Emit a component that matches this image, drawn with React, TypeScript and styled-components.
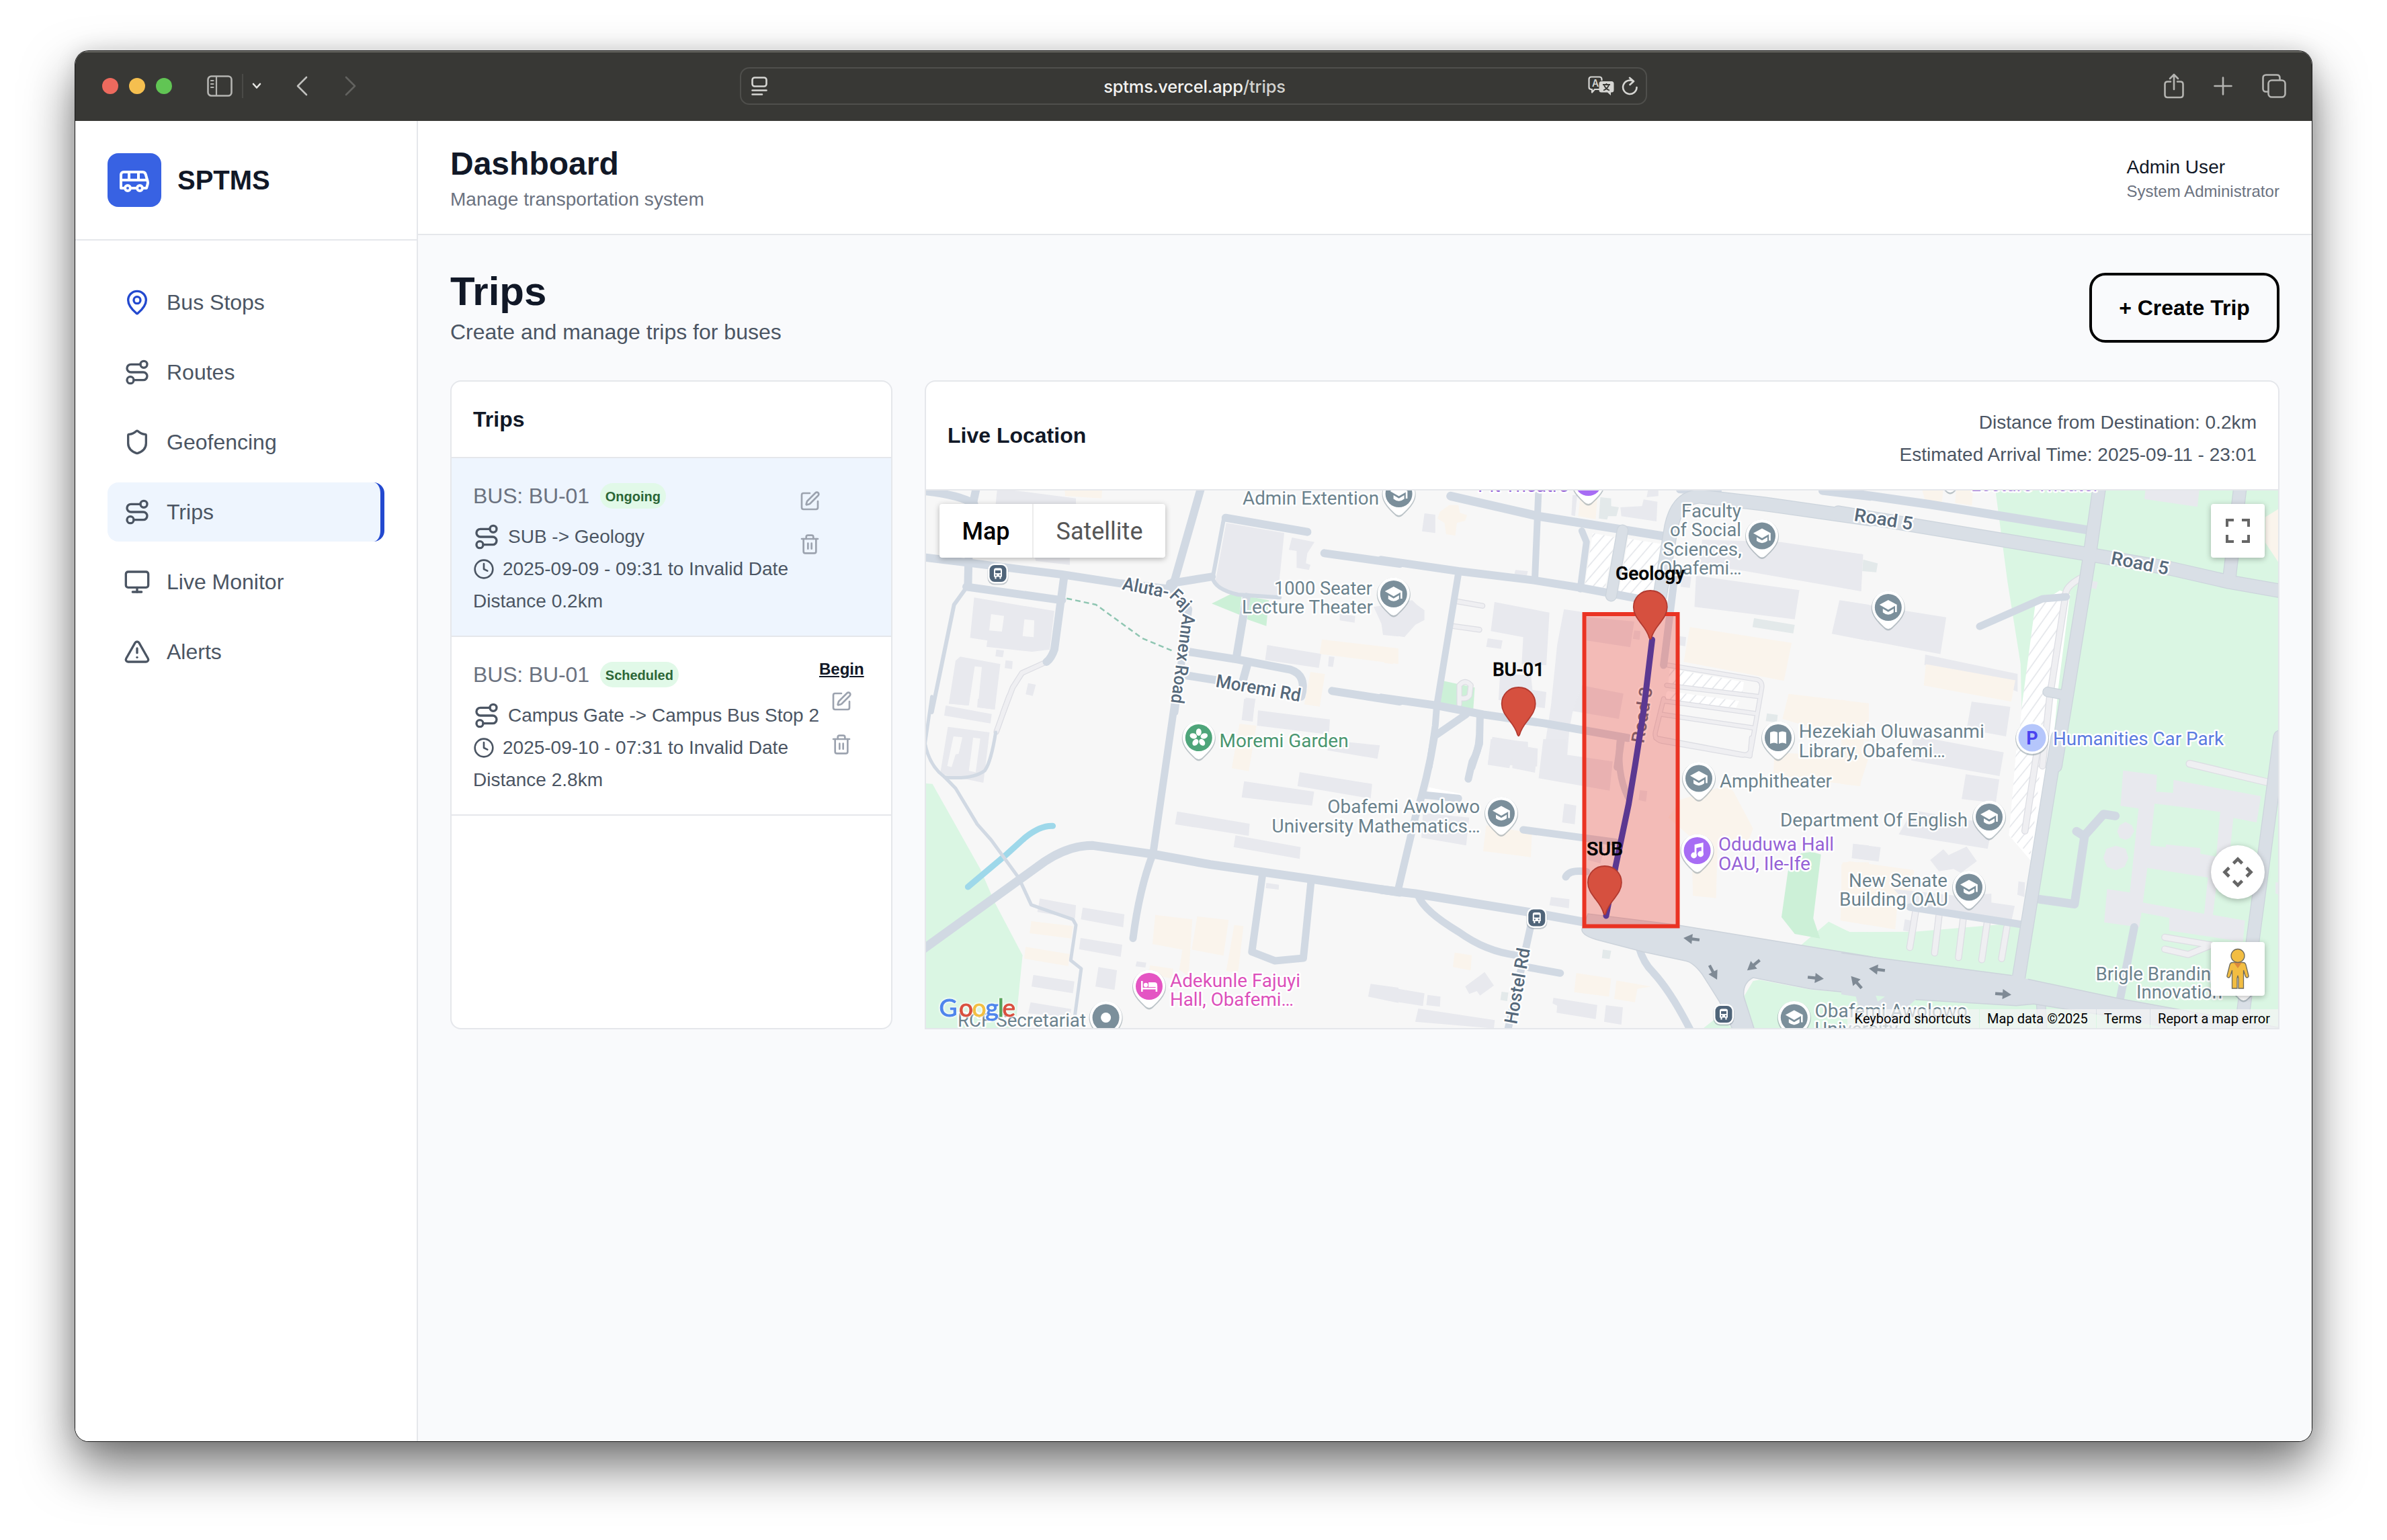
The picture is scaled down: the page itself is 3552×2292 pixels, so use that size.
import React from "react";
import styled, { createGlobalStyle, css } from "styled-components";
import { Bus, Clock, MapPin, Monitor, Route, Shield, SquarePen, Trash2, TriangleAlert } from "lucide-react";

const GlobalStyle = createGlobalStyle`
  *, *::before, *::after { box-sizing: border-box; }
  body { margin: 0; background: #ffffff; }
  h1, h2, h3, p { margin: 0; }
  button { font: inherit; margin: 0; cursor: pointer; }
`;

const colors = {
  ink: "#111827",
  body: "#4b5563",
  muted: "#6b7280",
  faint: "#9ca3af",
  line: "#e5e7eb",
  page: "#f9fafc",
  tint: "#eef5fe",
  blue: "#2349cf",
};

/* ---------- Browser window ---------- */

const Desktop = styled.div`
  width: 3552px;
  height: 2292px;
  padding: 76px 112px 147px;
  background: #ffffff;
  overflow: hidden;
  font-family: "Liberation Sans", Arial, sans-serif;
  color: ${colors.ink};
`;

const BrowserWindow = styled.div`
  width: 3328px;
  height: 2069px;
  display: flex;
  flex-direction: column;
  border-radius: 20px;
  background: #ffffff;
  box-shadow: 0 0 0 1px #161616, 0 36px 76px rgba(0, 0, 0, 0.56), 0 0 30px rgba(0, 0, 0, 0.12);
  overflow: hidden;
`;

const Toolbar = styled.div`
  flex: none;
  height: 105px;
  display: grid;
  grid-template-columns: 989px 1350px 1fr;
  align-items: center;
  background: #383835;
  border-bottom: 1px solid #000000;
  box-shadow: inset 0 2px 0 #6b6b66;
`;

const ToolbarLeft = styled.div`
  display: flex;
  align-items: center;
  padding-left: 40px;
`;

const Light = styled.span<{ $color: string }>`
  width: 24px;
  height: 24px;
  margin-right: 16px;
  border-radius: 50%;
  background: ${(p) => p.$color};
`;

const ToolIcon = styled.svg<{ $gap?: number; $color?: string }>`
  display: block;
  flex: none;
  margin-left: ${(p) => p.$gap ?? 0}px;
  fill: none;
  stroke: ${(p) => p.$color ?? "#b4b4b1"};
  stroke-width: 2.6;
  stroke-linecap: round;
  stroke-linejoin: round;
`;

const ToolDivider = styled.span`
  width: 2px;
  height: 36px;
  margin-left: 14px;
  background: #4a4a47;
`;

const AddressBar = styled.div`
  height: 56px;
  display: flex;
  align-items: center;
  justify-content: space-between;
  padding: 0 11px 0 15px;
  border: 2px solid #4f4f4c;
  border-radius: 14px;
  font: 500 25.5px/32px Inter, sans-serif;
  color: #f2f2f0;
`;

const AddressTools = styled.div`
  display: flex;
  align-items: center;
`;

const Url = styled.span`
  margin-left: 50px;
  padding-top: 2px;
  letter-spacing: -0.2px;
`;

const UrlPath = styled.span`
  color: #d2d2cf;
`;

const ToolbarRight = styled.div`
  display: flex;
  align-items: center;
  justify-content: flex-end;
  padding-right: 38px;
`;

/* ---------- Application shell ---------- */

const Page = styled.div`
  flex: 1;
  min-height: 0;
  margin-top: -1px;
  display: flex;
`;

const Sidebar = styled.aside`
  flex: none;
  width: 510px;
  background: #ffffff;
  border-right: 2px solid ${colors.line};
`;

const Brand = styled.div`
  height: 178px;
  display: flex;
  align-items: center;
  gap: 24px;
  padding: 0 48px;
  border-bottom: 2px solid ${colors.line};
  font-size: 40px;
  line-height: 56px;
  font-weight: 700;
`;

const BrandMark = styled.span`
  width: 80px;
  height: 80px;
  display: grid;
  place-items: center;
  border-radius: 16px;
  background: #3862e3;
  color: #ffffff;
`;

const Nav = styled.nav`
  display: flex;
  flex-direction: column;
  gap: 16px;
  padding: 48px;
`;

const NavItem = styled.a<{ $active?: boolean }>`
  height: 88px;
  display: flex;
  align-items: center;
  gap: 24px;
  padding: 0 24px;
  border-radius: 16px;
  font-size: 32px;
  line-height: 48px;
  color: ${colors.body};
  ${(p) =>
    p.$active &&
    css`
      background: ${colors.tint};
      border-right: 6px solid ${colors.blue};
    `}
`;

const Main = styled.main`
  flex: 1;
  min-width: 0;
  display: flex;
  flex-direction: column;
  background: ${colors.page};
`;

const TopBar = styled.header`
  height: 170px;
  display: flex;
  align-items: center;
  justify-content: space-between;
  padding: 0 48px;
  background: #ffffff;
  border-bottom: 2px solid ${colors.line};
`;

const TopTitle = styled.h1`
  font-size: 48px;
  line-height: 64px;
  font-weight: 700;
`;

const TopText = styled.p<{ $size: number; $line: number; $color: string }>`
  padding-top: 1px;
  margin-bottom: -1px;
  font-size: ${(p) => p.$size}px;
  line-height: ${(p) => p.$line}px;
  letter-spacing: 0.04px;
  color: ${(p) => p.$color};
`;

const Content = styled.div`
  padding: 48px;
  display: flex;
  flex-direction: column;
  gap: 48px;
`;

const Heading = styled.div`
  display: flex;
  align-items: center;
  justify-content: space-between;
`;

const PageTitle = styled.h2`
  font-size: 60px;
  line-height: 72px;
  font-weight: 700;
`;

const PageSubtitle = styled.p`
  font-size: 32px;
  line-height: 48px;
  color: ${colors.body};
`;

const CreateButton = styled.button`
  width: 283px;
  height: 104px;
  padding: 0;
  border: 4px solid #000000;
  border-radius: 24px;
  background: transparent;
  font-size: 32px;
  font-weight: 700;
  color: #000000;
`;

const Columns = styled.div`
  display: grid;
  grid-template-columns: 658px 1fr;
  gap: 48px;
  height: 966px;
`;

const Card = styled.section<{ $flatBottom?: boolean }>`
  display: flex;
  flex-direction: column;
  background: #ffffff;
  border: 2px solid ${colors.line};
  border-radius: ${(p) => (p.$flatBottom ? "16px 16px 0 0" : "16px")};
  overflow: hidden;
`;

const CardHeader = styled.div<{ $height: number }>`
  flex: none;
  height: ${(p) => p.$height}px;
  display: flex;
  align-items: center;
  justify-content: space-between;
  padding: 0 32px;
  border-bottom: 2px solid ${colors.line};
`;

const CardTitle = styled.h3`
  font-size: 32px;
  line-height: 48px;
  font-weight: 700;
`;

const Eta = styled.div`
  display: flex;
  flex-direction: column;
  gap: 8px;
  padding-top: 10px;
  font-size: 28px;
  line-height: 40px;
  letter-spacing: 0.03px;
  text-align: right;
  color: ${colors.body};
`;

/* ---------- Trip list ---------- */

const TripRow = styled.article<{ $selected?: boolean }>`
  display: flex;
  height: 266px;
  padding: 32px;
  border-bottom: 2px solid ${colors.line};
  background: ${(p) => (p.$selected ? colors.tint : "#ffffff")};
`;

const TripInfo = styled.div`
  display: flex;
  flex-direction: column;
  gap: 8px;
  white-space: nowrap;
`;

const TripTitle = styled.div`
  display: flex;
  align-items: center;
  gap: 16px;
  margin-bottom: 8px;
  font-size: 32px;
  line-height: 48px;
  letter-spacing: -0.15px;
  color: ${colors.muted};
`;

const Badge = styled.span`
  height: 38px;
  padding: 0 8px;
  border-radius: 19px;
  background: #e1f9e8;
  font-size: 20px;
  line-height: 40px;
  letter-spacing: 0;
  font-weight: 700;
  color: #2c6637;
`;

const TripLine = styled.div`
  height: 40px;
  display: flex;
  align-items: center;
  gap: 12px;
  padding-top: 1px;
  font-size: 28px;
  line-height: 40px;
  color: ${colors.body};
`;

const TripActions = styled.div`
  display: flex;
  flex-direction: column;
  align-items: center;
`;

const BeginLink = styled.a`
  font-size: 24px;
  line-height: 32px;
  font-weight: 700;
  text-decoration: underline;
  color: ${colors.ink};
`;

const IconButton = styled.button`
  width: 64px;
  height: 64px;
  display: grid;
  place-items: center;
  padding: 0;
  border: 0;
  background: none;
  color: ${colors.faint};
`;

interface Trip {
  bus: string;
  status: string;
  path: string;
  time: string;
  distance: string;
}

const trips: Trip[] = [
  { bus: "BU-01", status: "Ongoing", path: "SUB -> Geology", time: "2025-09-09 - 09:31 to Invalid Date", distance: "0.2km" },
  { bus: "BU-01", status: "Scheduled", path: "Campus Gate -> Campus Bus Stop 2", time: "2025-09-10 - 07:31 to Invalid Date", distance: "2.8km" },
];

const TripItem = ({ trip }: { trip: Trip }) => (
  <TripRow $selected={trip.status === "Ongoing"}>
    <TripInfo>
      <TripTitle>
        <span>BUS: {trip.bus}</span>
        <Badge>{trip.status}</Badge>
      </TripTitle>
      <TripLine>
        <Route size={40} />
        <span>{trip.path}</span>
      </TripLine>
      <TripLine>
        <Clock size={32} />
        <span>{trip.time}</span>
      </TripLine>
      <TripLine>Distance {trip.distance}</TripLine>
    </TripInfo>
    <TripActions>
      {trip.status === "Scheduled" && <BeginLink>Begin</BeginLink>}
      <IconButton aria-label="Edit trip">
        <SquarePen size={32} />
      </IconButton>
      <IconButton aria-label="Delete trip">
        <Trash2 size={32} />
      </IconButton>
    </TripActions>
  </TripRow>
);

/* ---------- Map ---------- */

const MapBox = styled.div`
  position: relative;
  flex: 1;
  min-height: 0;
  overflow: hidden;
  background: #f7f7f7;
  font-family: Roboto, sans-serif;
`;

const MapCanvas = styled.svg`
  display: block;
  width: 2012px;
  height: 800px;
`;

const Label = styled.text<{ $tone?: string; $strong?: boolean }>`
  font-family: Roboto, sans-serif;
  font-size: 27px;
  font-weight: ${(p) => (p.$strong ? 500 : 400)};
  fill: ${(p) => p.$tone ?? "#6b828d"};
  stroke: #ffffff;
  stroke-width: 5px;
  stroke-linejoin: round;
  paint-order: stroke;
`;

const MarkerLabel = styled.text`
  font-family: Roboto, sans-serif;
  font-size: 28px;
  font-weight: 500;
  fill: #000000;
  stroke: #000000;
  stroke-width: 0.5px;
`;

const GoogleMark = styled.text`
  font-family: Lato, sans-serif;
  font-size: 37px;
  stroke-width: 1px;
  filter: drop-shadow(0 0 1.5px #ffffff) drop-shadow(0 0 1.5px #ffffff);
`;

const controlSurface = css`
  background: #ffffff;
  box-shadow: 0 2px 8px rgba(0, 0, 0, 0.28);
`;

const MapTypes = styled.div`
  position: absolute;
  left: 20px;
  top: 20px;
  height: 80px;
  display: flex;
  border-radius: 4px;
  ${controlSurface}
`;

const MapType = styled.button<{ $on?: boolean }>`
  width: ${(p) => (p.$on ? 138 : 198)}px;
  padding: 2px 0 0;
  border: 0;
  border-left: ${(p) => (p.$on ? "0" : "2px solid #ececec")};
  background: none;
  font-size: 36px;
  font-weight: ${(p) => (p.$on ? 500 : 400)};
  color: ${(p) => (p.$on ? "#000000" : "#565656")};
`;

const MapControl = styled.button<{ $top: number; $round?: boolean }>`
  position: absolute;
  right: 20px;
  top: ${(p) => p.$top}px;
  width: 80px;
  height: 80px;
  display: grid;
  place-items: center;
  padding: 0;
  border: 0;
  border-radius: ${(p) => (p.$round ? "50%" : "4px")};
  ${controlSurface}
`;

const Attribution = styled.div`
  position: absolute;
  right: 0;
  bottom: 0;
  height: 28px;
  display: flex;
  font-size: 20px;
  line-height: 28px;
  color: #000000;
`;

const AttributionItem = styled.span`
  padding: 0 12px 0 11px;
  background: rgba(245, 245, 245, 0.7);
  margin-left: 1px;
  white-space: nowrap;
`;

const sheets = {
  nw: "matrix(0.45918 0 0 0.33333 1360 540)",
  n: "matrix(0.45918 0 0 0.33333 2060 700)",
  ne: "matrix(0.43367 0 0 0.38265 2740 540)",
  sw: "matrix(0.45918 0 0 0.33333 1360 1040)",
  s: "matrix(0.45918 0 0 0.33333 2060 1100)",
  se: "matrix(0.43367 0 0 0.33333 2740 1100)",
};
type Sheet = keyof typeof sheets;
const order: Sheet[] = ["nw", "n", "ne", "sw", "s", "se"];

type Area = [fill: string, path: string];
const G = "#daf6e3";
const G2 = "#ccf0d7";
const B = "#e8e9ee";
const B2 = "#e3e9ea";
const C = "#faf4ec";
const W = "#f7f7f7";
const H = "url(#hatch)";

const areas: Record<Sheet, Area[]> = {
  nw: [
    [G2, "965,1075 1045,1020 1062,1040 1055,1125"],
    [G2, "1090,1045 1150,1060 1142,1175 1080,1145"],
    [B, "270,560 525,605 525,640 265,630"],
    [B, "1012,715 1200,760 1185,960 1180,1045 1050,1030 975,990"],
    [B, "1225,780 1298,800 1275,850 1270,895 1285,902 1280,925 1240,915 1240,840 1215,835"],
    [B, "195,1048 455,1108 440,1280 383,1290 235,1268 238,1240 182,1228"],
    [W, "250,1122 292,1130 285,1200 244,1195"],
    [W, "358,1145 390,1150 388,1225 352,1220"],
    [B, "267,1280 292,1285 288,1315 264,1310"],
    [B, "297,1328 320,1332 318,1367 294,1363"],
    [B, "150,1312 280,1345 262,1548 207,1538 220,1358 197,1355 178,1530 113,1522 135,1330"],
    [B, "370,1430 395,1437 385,1487 362,1480"],
    [B, "1145,1260 1320,1300 1312,1362 1138,1327"],
    [B, "1345,1310 1363,1313 1358,1358 1342,1355"],
    [B, "1075,1495 1107,1500 1100,1562 1066,1562"],
    [B, "1490,1090 1570,1070 1570,1222 1520,1215 1515,1165"],
    [B, "1380,1120 1430,1130 1428,1160 1380,1150"],
    [B, "390,860 505,870 505,902 395,885"],
    [C, "488,560 610,565 608,605 490,595"],
    [C, "1322,1235 1570,1275 1570,1345 1315,1300"],
    [C, "1285,1380 1332,1390 1315,1535 1265,1525"],
  ],
  n: [
    [G2, "190,940 293,970 288,1070 182,1040"],
    ["#e9eaef", "582,620 640,632 640,960 610,1080 600,1150 590,1320 510,1320 540,1050 560,780"],
    ["#ffffff", "675,280 750,300 715,525 650,510"],
    [H, "675,280 750,300 715,525 650,510"],
    ["#ffffff", "790,305 905,330 870,570 760,545"],
    [H, "790,305 905,330 870,570 760,545"],
    ["#ffffff", "925,885 1165,945 1160,1000 920,950"],
    [H, "925,885 1165,945 1160,1000 920,950"],
    ["#ffffff", "915,985 1150,1030 1140,1060 910,1025"],
    [H, "915,985 1150,1030 1140,1060 910,1025"],
    [B, "765,165 835,160 840,130 885,140 882,228 768,205"],
    [B2, "700,120 735,125 735,160 760,165 752,205 725,205 722,220 695,215"],
    [B, "855,85 888,85 888,115 850,120"],
    [B, "610,110 625,110 618,205 606,200"],
    [B, "130,192 165,198 165,280 122,272"],
    [B, "425,445 465,450 460,480 420,470"],
    [B, "357,588 535,635 525,870 445,865 450,745 345,718"],
    [B, "335,750 383,760 378,797 330,788"],
    [B, "375,910 475,915 480,980 525,990 520,1062 480,1055 470,1040 370,1025"],
    [B, "350,1190 465,1215 465,1235 497,1245 495,1322 335,1312"],
    [B, "655,655 810,675 797,790 655,760"],
    [B, "810,715 830,718 827,757 805,752"],
    [B, "640,960 775,997 760,1110 610,1075"],
    [B, "1030,310 1285,320 1550,375 1545,540 1170,450 1020,420"],
    [B, "1010,470 1345,535 1330,665 1005,610"],
    [B2, "1198,660 1330,690 1325,728 1193,700"],
    [B, "1475,580 1570,600 1570,762 1450,730"],
    [B, "90,580 105,600 130,625 130,668 100,690 65,745 0,730 0,600"],
    [B2, "1240,1085 1275,1092 1272,1125 1236,1120"],
    [B, "955,740 978,745 975,785 950,780"],
    [B, "965,470 995,475 990,525 960,520"],
    [C, "210,155 240,155 245,190 268,200 262,225 235,235 230,292 200,285 195,235 172,215 180,185"],
    [C, "635,120 690,125 685,218 628,205"],
    [C, "0,790 35,800 28,865 0,860"],
    [C, "990,700 1320,770 1295,940 970,855"],
    [C, "1310,998 1570,1040 1570,1210 1340,1130 1290,1110"],
  ],
  ne: [
    [G, "527,480 1510,480 1510,1580 600,1580 620,1400 615,1170 570,850"],
    [C, "1455,600 1505,565 1505,785 1455,700"],
    ["#ffffff", "665,945 750,885 785,900 745,1260 720,1568 600,1568 620,1330"],
    [H, "665,945 750,885 775,900 720,1260 685,1568 600,1568 620,1330"],
    [B, "0,735 75,745 68,887 0,875"],
    [B2, "75,765 125,780 120,815 72,810"],
    [B, "0,925 360,990 340,1133 0,1060"],
    [B, "288,1135 605,1210 605,1280 585,1270 590,1235 285,1175"],
    [B, "447,1318 580,1338 565,1453 430,1425"],
    [B, "250,1450 557,1515 545,1568 240,1545"],
    [B, "1045,480 1230,480 1222,560 1040,530"],
    [B, "857,848 880,852 875,880 852,875"],
    [C, "275,485 350,490 345,545 290,545"],
    [C, "395,490 452,490 448,555 390,545"],
    [C, "290,1172 597,1235 583,1318 283,1255"],
    [C, "0,1310 88,1330 70,1568 0,1568"],
  ],
  sw: [
    [G, "38,378 60,380 215,760 262,910 352,1145 335,1380 330,1475 30,1475 30,378"],
    [B, "120,0 178,0 175,30 113,22"],
    [B, "207,0 265,0 262,48 205,38"],
    [B, "103,30 252,68 248,110 98,75"],
    [B, "110,125 245,150 225,375 85,335"],
    [W, "128,168 157,172 145,245 135,248 122,305 108,300"],
    [W, "192,173 215,178 200,328 178,322"],
    [B, "1070,0 1105,0 1098,102 1062,95"],
    [B, "1115,52 1348,92 1345,160 1112,120"],
    [B, "1345,185 1510,208 1502,268 1340,230"],
    [B, "1250,328 1485,380 1480,445 1243,390"],
    [B, "1070,368 1297,415 1290,477 1062,440"],
    [B, "853,503 1088,558 1085,612 846,560"],
    [B, "1042,610 1253,662 1250,715 1036,662"],
    [B, "1142,822 1183,830 1182,852 1140,845"],
    [B, "408,892 525,922 522,980 400,952"],
    [B, "547,932 682,962 678,1020 541,985"],
    [B, "540,1068 675,1098 670,1152 535,1118"],
    [B, "387,1233 520,1262 515,1315 381,1285"],
    [B, "598,1198 658,1212 650,1300 588,1285"],
    [B, "378,1355 510,1385 505,1420 370,1405"],
    [B, "722,1172 753,1178 750,1200 718,1195"],
    [B, "1480,1273 1570,1290 1570,1358 1472,1330"],
    [C, "1055,112 1110,120 1085,323 1030,310"],
    [C, "380,993 515,1015 510,1070 375,1047"],
    [C, "362,1108 505,1140 500,1193 357,1160"],
    [C, "782,965 902,985 890,1240 860,1210 870,1120 773,1095"],
    [C, "918,972 1020,988 1003,1147 900,1120"],
    [C, "1038,1010 1068,1015 1050,1225 1012,1215"],
    [C, "765,1190 840,1205 840,1250 760,1230"],
  ],
  s: [
    [G, "1350,920 1440,815 1508,862 1570,862 1570,975"],
    [G2, "1350,510 1385,503 1415,515 1390,800 1412,890 1330,870 1287,795 1308,590"],
    [G, "1195,1080 1215,1075 1380,1118 1515,1135 1570,1295 1200,1295 1165,1150"],
    [G, "1030,1295 1085,1235 1130,1295"],
    ["#ffffff", "145,215 250,245 240,265 140,240"],
    [B, "345,0 465,12 465,35 497,42 488,150 415,130 415,75 405,130 335,115"],
    [B, "515,0 590,0 590,70 740,100 730,230 500,175"],
    [B, "583,288 622,297 617,380 576,372"],
    [B, "125,330 275,350 265,475 120,440"],
    [B, "540,705 600,715 598,755 535,742"],
    [B2, "708,940 735,945 730,982 705,978"],
    [B, "828,228 852,232 848,280 824,272"],
    [B, "665,475 715,485 700,555 660,540"],
    [B, "325,1040 355,1100 310,1145 300,1125 275,1138 262,1105"],
    [B, "0,1105 130,1135 125,1192 0,1165"],
    [B, "140,1142 182,1150 180,1195 136,1188"],
    [B, "110,1203 358,1255 355,1292 100,1262"],
    [B2, "380,1128 402,1132 398,1170 376,1165"],
    [B, "548,1155 690,1187 685,1250 558,1222 560,1190 545,1180"],
    [B, "718,1188 773,1198 768,1275 712,1262"],
    [B, "1520,468 1570,475 1570,540 1515,530"],
    [C, "330,385 478,420 475,527 320,500"],
    [C, "1100,210 1130,230 1195,400 1180,455 1080,450 1075,710 1000,700 995,440 920,350 960,270"],
    [C, "1265,60 1570,80 1540,210 1260,160"],
    [C, "1485,550 1570,550 1570,830 1478,810"],
    [C, "228,953 283,965 280,1033 222,1018"],
    [C, "622,1045 735,1068 728,1150 615,1130"],
    [C, "752,1078 865,1105 820,1115 812,1175 745,1160"],
  ],
  se: [
    [G, "655,545 720,0 1510,0 1510,1300 0,1300 0,845 30,862 250,860 620,820"],
    ["#ffffff", "600,50 715,50 652,545 575,430"],
    [H, "600,50 690,50 650,520 575,430"],
    [C, "0,110 70,120 65,210 0,200"],
    [C, "28,545 250,585 240,700 195,700 185,850 0,810 0,560"],
    [B, "967,140 1083,160 1080,235 1138,240 1140,182 1440,255 1425,372 1345,352 1325,610 1280,620 1300,325 1075,288 1060,475 1112,483 1115,470 1232,487 1232,512 1290,525 1290,620 1275,785 1385,810 1378,905 1125,855 1125,798 1030,775 1022,840 902,818 912,670 990,685 1020,310 958,298"],
    [G, "1050,575 1258,618 1245,780 1035,730"],
    [B, "975,370 997,385 1005,412 992,440 975,450 955,440 947,412 955,385"],
    [B, "942,476 975,490 985,530 972,570 942,586 912,570 899,530 910,490"],
    [B, "245,0 260,0 557,60 543,165 240,95"],
    [B, "427,157 542,180 530,285 413,268"],
    [B, "245,318 520,380 502,490 197,425"],
    [B, "40,467 135,483 128,547 36,532"],
    [B, "350,492 368,518 430,480 465,545 410,598 385,580 335,590 305,540"],
    [B, "180,670 400,700 515,690 515,730 595,745 585,805 235,750"],
    [B, "218,805 240,810 235,860 212,855"],
    [B, "608,635 630,640 628,705 604,695"],
    [B, "1490,640 1505,640 1505,695 1490,690"],
  ],
};

type Road = [width: number, path: string];

const roads: Record<Sheet, Road[]> = {
  nw: [
    [12, "M30 868 L190 895 L480 945 L670 985 L830 1010"],
    [12, "M930 560 L845 970 L820 1010 M830 985 L965 955"],
    [11, "M845 1010 L890 1100 L845 1560"],
    [12, "M30 572 Q150 590 195 630 M202 560 L180 700 L175 1000"],
    [6, "M172 1000 L130 1080 L115 1180 L58 1560"],
    [12, "M170 1000 L480 1060 M487 950 L455 1280 Q445 1320 430 1335"],
    [12, "M1275 755 L1010 692"],
    [6, "M1005 690 L968 960 Q975 1010 1050 1035 L1185 1048"],
    [12, "M1078 1045 L1045 1315 M1080 1350 L1066 1420"],
    [12, "M890 1290 L1050 1325 L1220 1370 Q1275 1395 1255 1490"],
    [12, "M880 1395 L985 1418 M1330 850 L1575 897 M1355 1465 L1575 1512"],
  ],
  n: [
    [13, "M215 115 L500 205 L900 293"],
    [10, "M500 80 L488 480 M640 270 L655 320 L635 530"],
    [12, "M-10 400 L240 450 L480 490 L640 525 L830 575"],
    [10, "M240 460 L170 1050 L165 1140 L145 1325"],
    [12, "M-10 1015 L170 1050 L320 1090 L520 1130 L790 1195"],
    [11, "M265 1090 L170 1180 M310 1100 L308 1220 L283 1325 M768 1200 L755 1325"],
    [11, "M940 480 L905 870"],
    [12, "M958 85 L1080 92 M1420 92 L1575 118"],
  ],
  ne: [
    [13, "M-10 500 L300 550 L845 650"],
    [11, "M475 1025 L690 918 L772 910"],
  ],
  sw: [
    [13, "M30 1118 L400 750 Q490 655 580 655 L780 695 L960 740 L1290 805 L1575 864"],
    [11, "M848 -10 L775 690 Q730 850 710 1070"],
    [11, "M1130 780 L1095 1130 L1170 1170 L1262 1158 L1287 815"],
    [5, "M58 -10 L36 200 Q50 300 100 350 L135 400 L205 560 L250 630 L340 800 L380 920 L410 935 L515 985 L525 1010 L508 1168 L542 1205 L522 1410"],
    [5, "M265 150 Q250 280 230 320 Q190 362 100 350"],
  ],
  s: [
    [13, "M-10 672 L100 690 L480 775 L660 820"],
    [11, "M162 -10 Q140 180 100 350 L45 670"],
    [11, "M308 -10 Q305 60 285 100 L272 178 M130 250 L240 265"],
    [11, "M450 405 L750 460 M588 615 Q600 582 655 592"],
    [11, "M110 700 Q130 770 240 860 Q330 950 430 965 M475 830 L400 1300 M470 1020 L570 1045"],
    [11, "M825 930 Q840 1000 870 1040 Q930 1130 992 1300"],
    [10, "M765 -10 Q750 150 790 260"],
  ],
  se: [
    [13, "M940 343 L900 335 L835 430 L800 737 L680 715 M807 412 L832 432"],
    [11, "M235 750 L620 828"],
    [12, "M1005 840 L955 1170"],
  ],
};

const mainRoads: Record<Sheet, Road[]> = {
  nw: [],
  n: [
    [15, "M772 268 L735 560"],
    [19, "M893 560 L930 250 Q950 122 1020 116 L1230 150 L1575 218"],
  ],
  ne: [
    [19, "M-10 583 L850 745 L1130 800 L1330 852 L1510 888"],
    [18, "M887 470 L848 780 L735 1568 M1370 470 L1330 850"],
    [13, "M708 1280 L765 1292"],
  ],
  sw: [],
  s: [],
  se: [
    [18, "M742 -10 L608 1070 M1505 -10 L1378 1230"],
    [12, "M685 1180 L690 1300"],
  ],
};

const lanes: Record<Sheet, Road[]> = {
  nw: [[6, "M430 1335 L350 1385 L320 1450 L288 1565"]],
  n: [
    [6, "M235 585 L318 605 M220 695 L308 712"],
    [5, "M920 870 L1210 935 Q1228 945 1222 980 L1188 1250 Q1180 1278 1150 1270 L900 1210 Q870 1200 880 1160 L905 1020"],
    [5, "M915 960 L1215 1010 M905 1030 L1200 1085 M900 1090 L1195 1150"],
    [6, "M243 1045 L243 960 Q262 930 280 960 L276 1005 Q268 1022 250 1018"],
  ],
  ne: [[8, "M820 838 Q770 870 770 900 L715 1300 L690 1568"]],
  sw: [[6, "M308 -10 L267 148"]],
  s: [[5, "M880 -5 L1185 75 L1190 -5"]],
  se: [
    [8, "M255 768 L235 930 M335 790 L320 955 M418 805 L402 975 M500 822 L482 985 M568 840 L550 980"],
    [9, "M1195 110 L1480 198"],
    [8, "M1110 885 L1270 920 L1190 962 L1110 938"],
    [8, "M672 50 L630 410"],
  ],
};

const RoadLayer = ({ set, color, casing }: { set: Record<Sheet, Road[]>; color: string; casing?: string }) => (
  <g fill="none" strokeLinecap="round" strokeLinejoin="round">
    {casing &&
      order.map((s) => (
        <g key={s} transform={sheets[s]} stroke={casing}>
          {set[s].map(([w, d]) => (
            <path key={d} d={d} strokeWidth={w + 2.5} vectorEffect="non-scaling-stroke" />
          ))}
        </g>
      ))}
    {order.map((s) => (
      <g key={s} transform={sheets[s]} stroke={color}>
        {set[s].map(([w, d]) => (
          <path key={d} d={d} strokeWidth={w} vectorEffect="non-scaling-stroke" />
        ))}
      </g>
    ))}
  </g>
);

type Glyph = "school" | "book" | "flower" | "bed" | "dot" | "music" | "none";

const glyphs: Record<Glyph, React.ReactNode> = {
  school: (
    <g fill="#ffffff">
      <path d="M-13 -4 L0 -11 L13 -4 L0 3.5 Z" />
      <path d="M-8 2 V7.5 Q0 14 8 7.5 V2 L0 6.8 Z" />
      <path d="M10.2 -4 h2.6 v11 h-2.6 z" />
    </g>
  ),
  book: <path d="M-12 -8 Q-6 -11 -1 -8 V9 Q-6 6 -12 9 Z M12 -8 Q6 -11 1 -8 V9 Q6 6 12 9 Z" fill="#ffffff" />,
  flower: (
    <g fill="#ffffff">
      {[0, 72, 144, 216, 288].map((a) => (
        <ellipse key={a} cx="0" cy="-8.4" rx="4" ry="5.4" transform={`rotate(${a})`} />
      ))}
    </g>
  ),
  bed: (
    <g fill="#ffffff">
      <path d="M-12 -8 h2.6 v10 h19 v-3 h2.6 v9 h-2.6 v-3.4 h-19 v3.4 h-2.6 z" />
      <path d="M-1 -6 H8 Q12 -6 12 -2 V1 H-1 Z" />
      <circle cx="-5" cy="-2" r="3.2" />
    </g>
  ),
  dot: <circle r="7.5" fill="#ffffff" />,
  music: (
    <g fill="#ffffff">
      <path d="M-4 -9 L9 -12 V5 H6.2 V-5.5 L-1.2 -4 V7 H-4 Z" />
      <circle cx="-5" cy="7" r="4.4" />
      <circle cx="5" cy="5" r="4.4" />
    </g>
  ),
  none: null,
};

const pins: [number, number, Glyph, string][] = [
  [2081.6, 735, "school", "#7b8f9b"],
  [2073.8, 884, "school", "#7b8f9b"],
  [2622, 797.5, "school", "#7b8f9b"],
  [2809.8, 904, "school", "#7b8f9b"],
  [2528, 1158.5, "school", "#7b8f9b"],
  [2234, 1210.5, "school", "#7b8f9b"],
  [2960, 1216, "school", "#7b8f9b"],
  [2930, 1320.5, "school", "#7b8f9b"],
  [2669.8, 1514.5, "school", "#7b8f9b"],
  [2646, 1098, "book", "#7b8f9b"],
  [1783.8, 1098, "flower", "#4ea57a"],
  [1710, 1468, "bed", "#e455c3"],
  [1645.6, 1514.5, "dot", "#7b8f9b"],
  [2525.6, 1266, "music", "#a76cf4"],
  [2363.5, 718, "none", "#a76cf4"],
  [2902, 701, "none", "#7b8f9b"],
  [3338.5, 1457, "none", "#7b8f9b"],
];

const slate = "#56697b";
const violet = "#9562d6";
const pink = "#dc50bb";

type PlaceLabel = { x: number; y: number; w: number; t: string; tone?: string; r?: number };

const labels: PlaceLabel[] = [
  { x: 1849, y: 750.5, w: 203, t: "Admin Extention" },
  { x: 1896, y: 884.5, w: 146, t: "1000 Seater" },
  { x: 1848, y: 912.5, w: 195, t: "Lecture Theater" },
  { x: 1808, y: 1022, w: 128, t: "Moremi Rd", tone: slate, r: 10 },
  { x: 1669, y: 877, w: 70, t: "Aluta-", tone: slate, r: 11 },
  { x: 1739, y: 888, w: 32, t: "Faj", tone: slate, r: 44 },
  { x: 1760, y: 913, w: 134, t: "Annex Road", tone: slate, r: 97.5 },
  { x: 2199, y: 732, w: 135, t: "Pit Theatre", tone: violet },
  { x: 2502, y: 769.5, w: 89, t: "Faculty" },
  { x: 2485, y: 798, w: 106, t: "of Social" },
  { x: 2474.6, y: 826.5, w: 117, t: "Sciences," },
  { x: 2469.6, y: 854.5, w: 122, t: "Obafemi…" },
  { x: 2676.7, y: 1098, w: 276, t: "Hezekiah Oluwasanmi" },
  { x: 2676.7, y: 1126.5, w: 218, t: "Library, Obafemi…" },
  { x: 2758, y: 775, w: 88, t: "Road 5", tone: slate, r: 9 },
  { x: 3140, y: 839, w: 87, t: "Road 5", tone: slate, r: 11 },
  { x: 2933, y: 730.5, w: 191, t: "Lecture Theater", tone: violet },
  { x: 3055, y: 1108.5, w: 254, t: "Humanities Car Park", tone: "#5b7be0" },
  { x: 1814.6, y: 1112, w: 192, t: "Moremi Garden", tone: "#4a9670" },
  { x: 1741, y: 1468.5, w: 194, t: "Adekunle Fajuyi", tone: pink },
  { x: 1741, y: 1496.5, w: 184, t: "Hall, Obafemi…", tone: pink },
  { x: 1975.3, y: 1209.5, w: 227, t: "Obafemi Awolowo" },
  { x: 1892.6, y: 1238.5, w: 310, t: "University Mathematics…" },
  { x: 1425, y: 1527.7, w: 191, t: "RCF Secretariat" },
  { x: 2559, y: 1172, w: 167, t: "Amphitheater" },
  { x: 2649, y: 1229.5, w: 279, t: "Department Of English" },
  { x: 2557, y: 1266, w: 172, t: "Oduduwa Hall", tone: violet },
  { x: 2557, y: 1295, w: 137, t: "OAU, Ile-Ife", tone: violet },
  { x: 2751, y: 1319.5, w: 147, t: "New Senate" },
  { x: 2737, y: 1347.5, w: 162, t: "Building OAU" },
  { x: 2257, y: 1525, w: 114, t: "Hostel Rd", tone: slate, r: -80 },
  { x: 3118.6, y: 1458.5, w: 187, t: "Brigle Branding" },
  { x: 3179, y: 1486, w: 128, t: "Innovation" },
  { x: 2700.6, y: 1513.5, w: 227, t: "Obafemi Awolowo" },
  { x: 2700.6, y: 1541, w: 124, t: "University" },
];

const busStops = [
  [1485, 853.5],
  [2286.8, 1366],
  [2565, 1509.5],
];

/* x, y and heading in degrees; 0 points right */
const arrows = [
  [2518, 1397.5, 187],
  [2549, 1446.5, 62],
  [2610, 1436, 141],
  [2701, 1455.5, 6],
  [2763, 1462.5, 229],
  [2794, 1443, 187],
  [2980, 1479.5, 4],
];

const markers = [
  { x: 2455.8, y: 878, label: "Geology", lx: 2404, ly: 862.5, w: 103 },
  { x: 2259.7, y: 1022, label: "BU-01", lx: 2221, ly: 1006, w: 77 },
  { x: 2387.9, y: 1288, label: "SUB", lx: 2361, ly: 1272.5, w: 54 },
];

const googleLetters = [
  { c: "G", x: 1397.5, fill: "#4f86ec" },
  { c: "o", x: 1427, fill: "#d9503f" },
  { c: "o", x: 1446.5, fill: "#f2bf42" },
  { c: "g", x: 1466.5, fill: "#4f86ec" },
  { c: "l", x: 1485, fill: "#58a55c" },
  { c: "e", x: 1491.5, fill: "#d9503f" },
];

const CampusMap = () => (
  <MapCanvas viewBox="1378 730 2012 800">
    <defs>
      <pattern id="hatch" width="30" height="48" patternUnits="userSpaceOnUse" patternTransform="rotate(32)">
        <path d="M8 0 V48" stroke="#dfe1e6" strokeWidth="3.5" />
      </pattern>
    </defs>
    {order.map((s) => (
      <g key={s} transform={sheets[s]}>
        {areas[s].map(([fill, pts]) => (
          <polygon key={fill + pts} points={pts} fill={fill} />
        ))}
      </g>
    ))}
    <g fill="none" strokeLinecap="round" transform={sheets.sw}>
      <path d="M175 840 L300 695 L360 620 Q410 565 450 568" stroke="#9ed8ea" strokeWidth="9" vectorEffect="non-scaling-stroke" />
    </g>
    <path
      d="M495 1052 L590 1080 L740 1230 L845 1290"
      transform={sheets.nw}
      fill="none"
      stroke="#8fc6b2"
      strokeWidth="2.5"
      strokeDasharray="8 5"
      vectorEffect="non-scaling-stroke"
    />
    <RoadLayer set={lanes} color="#efeff2" casing="#dcdde3" />
    <RoadLayer set={roads} color="#d1d9e3" />
    <RoadLayer set={mainRoads} color="#d9dfe6" casing="#ccd4dc" />
    <g fill="#d9dfe6" stroke="#ccd3db" strokeWidth="1.5">
      <path
        d="M640 850 L660 780 L950 830 L1350 920 L1570 970 L1690 1005 L1690 1240 L1620 1240 L1570 1150 L1515 1133 L1380 1115 L1195 1065 Q1160 1090 1165 1150 L1200 1300 L1130 1300 L1085 1170 L1030 1050 Q1000 995 975 990 L840 950 L700 900 Q640 880 640 850 Z"
        transform={sheets.s}
        vectorEffect="non-scaling-stroke"
      />
      <path
        d="M0 955 L585 1055 L640 1072 L960 1160 L1510 1290 L1510 1300 L1150 1300 L900 1232 L660 1183 L600 1190 L255 1163 L215 1210 L170 1300 L80 1300 L50 1150 L0 1140 Z"
        transform={sheets.se}
        stroke="none"
      />
      <path d="M0 955 L585 1055 M640 1072 L960 1160 L1510 1290 M900 1232 L660 1183 L600 1190 L255 1163" transform={sheets.se} fill="none" vectorEffect="non-scaling-stroke" />
    </g>
    <path d="M118 1145 L150 1150 L125 1172 Z" transform={sheets.se} fill={G} />

    {arrows.map(([x, y, a]) => (
      <path key={x} d="M-11 -2.2 H0 V-7.5 L13 0 L0 7.5 V2.2 H-11 Z" fill="#7f8a95" transform={`translate(${x} ${y}) rotate(${a})`} />
    ))}

    <Label $tone={slate} $strong textLength={84} lengthAdjust="spacingAndGlyphs" transform="translate(2446 1107) rotate(-81)">
      Road 3
    </Label>
    {labels.map((l) => (
      <Label
        key={l.t + l.x + l.y}
        $tone={l.tone}
        $strong={l.tone === slate}
        textLength={l.w}
        lengthAdjust="spacingAndGlyphs"
        transform={`translate(${l.x} ${l.y}) rotate(${l.r ?? 0})`}
      >
        {l.t}
      </Label>
    ))}

    {pins.map(([x, y, glyph, color]) => (
      <g key={`${x}-${y}`} transform={`translate(${x} ${y})`}>
        <path d="M-23 9 A25 25 0 1 1 23 9 Q20 17 7 29 Q0 37 -7 29 Q-20 17 -23 9 Z" fill="#8d9aa3" opacity="0.55" transform="translate(0 1.6)" />
        <path d="M-22 9 A24 24 0 1 1 22 9 Q19 17 6 29 Q0 35 -6 29 Q-19 17 -22 9 Z" fill="#ffffff" />
        <circle r="20" fill={color} />
        {glyphs[glyph]}
      </g>
    ))}

    <circle cx="3024" cy="1099.5" r="25" fill="#8d9aa3" opacity="0.55" />
    <circle cx="3024" cy="1098" r="24" fill="#ffffff" />
    <circle cx="3024" cy="1098" r="20.5" fill="#b5c6fb" />
    <text x="3024" y="1107.5" textAnchor="middle" fontFamily="Roboto, sans-serif" fontSize="27" fontWeight="700" fill="#4a43f0">
      P
    </text>

    {busStops.map(([x, y]) => (
      <g key={x} transform={`translate(${x} ${y})`}>
        <rect x="-15.5" y="-14" width="31" height="31" rx="10" fill="#8d9aa3" opacity="0.5" />
        <rect x="-15" y="-15" width="30" height="30" rx="10" fill="#ffffff" />
        <rect x="-12.5" y="-12.5" width="25" height="25" rx="7.5" fill="#4f6479" />
        <path d="M-6 -5 Q-6 -8 -3 -8 H3 Q6 -8 6 -5 V5 H4.6 V8 H2.4 V5 H-2.4 V8 H-4.6 V5 H-6 Z" fill="#ffffff" />
        <rect x="-4" y="-4.6" width="8" height="4.2" fill="#4f6479" />
        <circle cx="-3" cy="2.4" r="1.1" fill="#4f6479" />
        <circle cx="3" cy="2.4" r="1.1" fill="#4f6479" />
      </g>
    ))}

    <rect x="2357.5" y="914" width="139" height="464.5" fill="#ea3323" fillOpacity="0.3" stroke="#ea3323" strokeWidth="6" />
    <path
      d="M2458.5 952 L2445.5 1060 L2433 1140 L2423.5 1197 L2404 1290 L2390 1363"
      fill="none"
      stroke="#5b3891"
      strokeWidth="9"
      strokeLinecap="round"
      strokeLinejoin="round"
    />
    {markers.map((m) => (
      <g key={m.label}>
        <path
          transform={`translate(${m.x} ${m.y})`}
          d="M0 1 C-14.5 1 -25 12 -25 25.5 C-25 36 -19 43 -13 51 C-7 58.5 -3.5 64 -1.5 71.5 Q0 75 1.5 71.5 C3.5 64 7 58.5 13 51 C19 43 25 36 25 25.5 C25 12 14.5 1 0 1 Z"
          fill="#d6503f"
          stroke="#b23a30"
          strokeWidth="1.8"
        />
        <MarkerLabel x={m.lx} y={m.ly} textLength={m.w} lengthAdjust="spacingAndGlyphs">
          {m.label}
        </MarkerLabel>
      </g>
    ))}

    <GoogleMark y="1513">
      {googleLetters.map((l) => (
        <tspan key={l.x} x={l.x} fill={l.fill} stroke={l.fill}>
          {l.c}
        </tspan>
      ))}
    </GoogleMark>
  </MapCanvas>
);

const Pegman = () => (
  <svg width="36" height="62" viewBox="0 0 36 62" fill="#f2bd42" stroke="#6d6a5c" strokeWidth="1.3">
    <path d="M10 21.5 H26 Q29 21.5 30 25 L34 41 Q34.5 43.5 32 44 Q30 44.3 29 41 L26.5 33 V60 H19 V45 L18 41 L17 45 V60 H9.5 V33 L7 41 Q6 44.3 4 44 Q1.5 43.5 2 41 L6 25 Q7 21.5 10 21.5 Z" />
    <path d="M12 21.5 H24 L18 30 Z" fill="#dc8a3c" stroke="none" />
    <circle cx="18" cy="11.5" r="10" />
  </svg>
);

const LiveMap = () => (
  <MapBox>
    <CampusMap />
    <MapTypes>
      <MapType $on>Map</MapType>
      <MapType>Satellite</MapType>
    </MapTypes>
    <MapControl $top={20} aria-label="Toggle fullscreen view">
      <svg width="36" height="36" viewBox="0 0 18 18" fill="#666666">
        <path d="M0 0v6h2V2h4V0H0zm16 0h-4v2h4v4h2V0h-2zm0 16h-4v2h6v-6h-2v4zM2 12H0v6h6v-2H2v-4z" />
      </svg>
    </MapControl>
    <MapControl $top={528} $round aria-label="Map camera controls">
      <svg width="46" height="46" viewBox="-23 -23 46 46" fill="none" stroke="#666666" strokeWidth="4.6">
        {[0, 90, 180, 270].map((a) => (
          <path key={a} d="M-6.5 -13 L0 -19.5 L6.5 -13" transform={`rotate(${a})`} />
        ))}
      </svg>
    </MapControl>
    <MapControl $top={672} aria-label="Street View">
      <Pegman />
    </MapControl>
    <Attribution>
      <AttributionItem>Keyboard shortcuts</AttributionItem>
      <AttributionItem>Map data ©2025</AttributionItem>
      <AttributionItem>Terms</AttributionItem>
      <AttributionItem>Report a map error</AttributionItem>
    </Attribution>
  </MapBox>
);

/* ---------- Browser toolbar ---------- */

const BrowserToolbar = () => (
  <Toolbar>
    <ToolbarLeft>
      <Light $color="#ed6a5e" />
      <Light $color="#f5bf4f" />
      <Light $color="#61c554" />
      <ToolIcon $gap={36} width="38" height="32" viewBox="0 0 38 32">
        <rect x="1.5" y="1.5" width="35" height="29" rx="5" />
        <path d="M14 2 V30 M6 8 H9.5 M6 13 H9.5 M6 18 H9.5" strokeWidth="2.2" />
      </ToolIcon>
      <ToolDivider />
      <ToolIcon $gap={13} $color="#e6e6e3" width="14" height="10" viewBox="0 0 14 10">
        <path d="M2 2 L7 7.5 L12 2" />
      </ToolIcon>
      <ToolIcon $gap={52} width="17" height="30" viewBox="0 0 17 30" $color="#c0c0bd">
        <path d="M15 2 L2 15 L15 28" />
      </ToolIcon>
      <ToolIcon $gap={55} width="17" height="30" viewBox="0 0 17 30" $color="#62625f">
        <path d="M2 2 L15 15 L2 28" />
      </ToolIcon>
    </ToolbarLeft>
    <AddressBar>
      <ToolIcon $color="#d6d6d3" width="24" height="28" viewBox="0 0 24 28">
        <rect x="1.5" y="1.5" width="21" height="13" rx="3.5" />
        <path d="M1.5 20.5 H22.5 M1.5 26.5 H16" />
      </ToolIcon>
      <Url>
        sptms.vercel.app<UrlPath>/trips</UrlPath>
      </Url>
      <AddressTools>
        <svg width="40" height="30" viewBox="0 0 40 30">
          <path d="M17 20 H10 L6 24.5 V20 H5 Q1.5 20 1.5 16.5 V5 Q1.5 1.5 5 1.5 H17 Q20.5 1.5 20.5 5 V7" fill="none" stroke="#d6d6d3" strokeWidth="2.2" strokeLinejoin="round" />
          <text x="11" y="16" textAnchor="middle" fontFamily="Inter, sans-serif" fontWeight="600" fontSize="14" fill="#d6d6d3">A</text>
          <path d="M20 8 H35 Q38.5 8 38.5 11.5 V21 Q38.5 24.5 35 24.5 H34 V29 L29 24.5 H20 Q16.5 24.5 16.5 21 V11.5 Q16.5 8 20 8 Z" fill="#d6d6d3" />
          <path d="M22 13 H33 M27.5 11 V13 M24 14 Q27 20 32 21.5 M31 14 Q28 20 23 21.5" fill="none" stroke="#383835" strokeWidth="1.8" />
        </svg>
        <ToolIcon $gap={10} $color="#d6d6d3" width="25" height="29" viewBox="0 0 25 29">
          <path d="M17.5 7 A10.2 10.2 0 1 0 22.5 16 M12 1.8 L18 7 L12.5 12" />
        </ToolIcon>
      </AddressTools>
    </AddressBar>
    <ToolbarRight>
      <ToolIcon width="30" height="38" viewBox="0 0 30 38">
        <path d="M10 12.5 H5.5 Q1.5 12.5 1.5 16.5 V32 Q1.5 36 5.5 36 H24.5 Q28.5 36 28.5 32 V16.5 Q28.5 12.5 24.5 12.5 H20 M15 24 V2 M9 8 L15 2 L21 8" />
      </ToolIcon>
      <ToolIcon $gap={44} width="28" height="28" viewBox="0 0 28 28">
        <path d="M14 1.5 V26.5 M1.5 14 H26.5" />
      </ToolIcon>
      <ToolIcon $gap={44} width="36" height="36" viewBox="0 0 36 36">
        <rect x="9.5" y="9.5" width="25" height="25" rx="5" />
        <path d="M9 26.5 H6 Q1.5 26.5 1.5 22 V6 Q1.5 1.5 6 1.5 H22 Q26.5 1.5 26.5 6 V9" />
      </ToolIcon>
    </ToolbarRight>
  </Toolbar>
);

const navItems = [
  { label: "Bus Stops", icon: MapPin, color: colors.blue },
  { label: "Routes", icon: Route },
  { label: "Geofencing", icon: Shield },
  { label: "Trips", icon: Route, active: true },
  { label: "Live Monitor", icon: Monitor },
  { label: "Alerts", icon: TriangleAlert },
];

export default function App() {
  return (
    <>
      <GlobalStyle />
      <Desktop>
        <BrowserWindow>
          <BrowserToolbar />
          <Page>
            <Sidebar>
              <Brand>
                <BrandMark>
                  <Bus size={48} />
                </BrandMark>
                SPTMS
              </Brand>
              <Nav>
                {navItems.map(({ label, icon: Icon, color, active }) => (
                  <NavItem key={label} $active={active}>
                    <Icon size={40} color={color ?? colors.body} />
                    {label}
                  </NavItem>
                ))}
              </Nav>
            </Sidebar>
            <Main>
              <TopBar>
                <div>
                  <TopTitle>Dashboard</TopTitle>
                  <TopText $size={28} $line={40} $color={colors.muted}>
                    Manage transportation system
                  </TopText>
                </div>
                <div>
                  <TopText $size={28} $line={40} $color={colors.ink}>
                    Admin User
                  </TopText>
                  <TopText $size={24} $line={32} $color={colors.muted}>
                    System Administrator
                  </TopText>
                </div>
              </TopBar>
              <Content>
                <Heading>
                  <div>
                    <PageTitle>Trips</PageTitle>
                    <PageSubtitle>Create and manage trips for buses</PageSubtitle>
                  </div>
                  <CreateButton>+ Create Trip</CreateButton>
                </Heading>
                <Columns>
                  <Card>
                    <CardHeader $height={114}>
                      <CardTitle>Trips</CardTitle>
                    </CardHeader>
                    {trips.map((trip) => (
                      <TripItem key={trip.status} trip={trip} />
                    ))}
                  </Card>
                  <Card $flatBottom>
                    <CardHeader $height={162}>
                      <CardTitle>Live Location</CardTitle>
                      <Eta>
                        <span>Distance from Destination: 0.2km</span>
                        <span>Estimated Arrival Time: 2025-09-11 - 23:01</span>
                      </Eta>
                    </CardHeader>
                    <LiveMap />
                  </Card>
                </Columns>
              </Content>
            </Main>
          </Page>
        </BrowserWindow>
      </Desktop>
    </>
  );
}
